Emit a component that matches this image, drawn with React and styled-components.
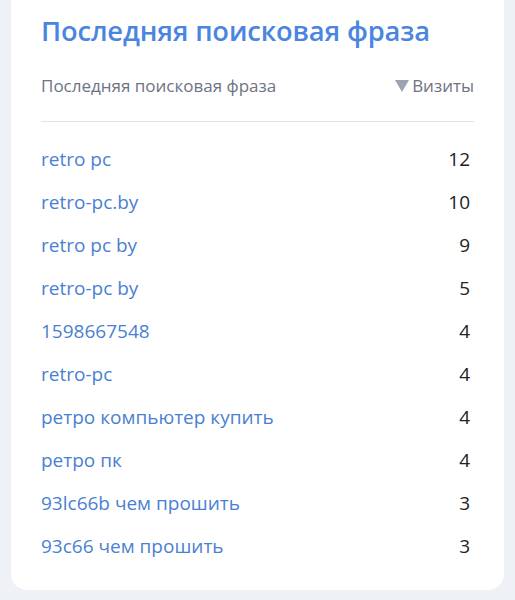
import React from "react";
import styled, { createGlobalStyle } from "styled-components";

const Global = createGlobalStyle`
  html, body { margin: 0; padding: 0; background: #eef1f6; }
  body { font-family: "Open Sans", "Noto Sans", sans-serif; }
`;

const Page = styled.div`
  padding: 0 11px 11px;
`;

const Card = styled.section`
  background: #ffffff;
  border-radius: 0 0 16px 16px;
  padding: 12px 30px 23px 30px;
`;

const Title = styled.h1`
  margin: 0;
  font-size: 27.3px;
  line-height: 38px;
  font-weight: 600;
  color: #4a86e0;
  letter-spacing: -0.15px;
`;

const HeaderRow = styled.div`
  display: flex;
  align-items: center;
  justify-content: space-between;
  height: 71px;
  border-bottom: 1px solid #e3e3e3;
  font-size: 17px;
  color: #6e7382;
`;

const SortHead = styled.div`
  display: flex;
  align-items: center;
  gap: 2px;
`;

const Rows = styled.div`
  padding-top: 15px;
`;

const Row = styled.div`
  display: flex;
  align-items: center;
  justify-content: space-between;
  height: 43px;
  font-size: 19px;
`;

const Phrase = styled.a`
  color: #4a7fd1;
  text-decoration: none;
`;

const Count = styled.span`
  color: #222222;
  padding-right: 4px;
`;

const data = [
  ["retro pc", 12],
  ["retro-pc.by", 10],
  ["retro pc by", 9],
  ["retro-pc by", 5],
  ["1598667548", 4],
  ["retro-pc", 4],
  ["ретро компьютер купить", 4],
  ["ретро пк", 4],
  ["93lc66b чем прошить", 3],
  ["93c66 чем прошить", 3],
];

export default function App() {
  return (
    <Page>
      <Global />
      <Card>
        <Title>Последняя поисковая фраза</Title>
        <HeaderRow>
          <span>Последняя поисковая фраза</span>
          <SortHead>
            <svg width="16" height="14" viewBox="0 0 16 14">
              <path d="M1 1 H15 L8 13 Z" fill="#9ea3b0" />
            </svg>
            <span>Визиты</span>
          </SortHead>
        </HeaderRow>
        <Rows>
          {data.map(([p, c], i) => (
            <Row key={i}>
              <Phrase href="#">{p}</Phrase>
              <Count>{c}</Count>
            </Row>
          ))}
        </Rows>
      </Card>
    </Page>
  );
}
